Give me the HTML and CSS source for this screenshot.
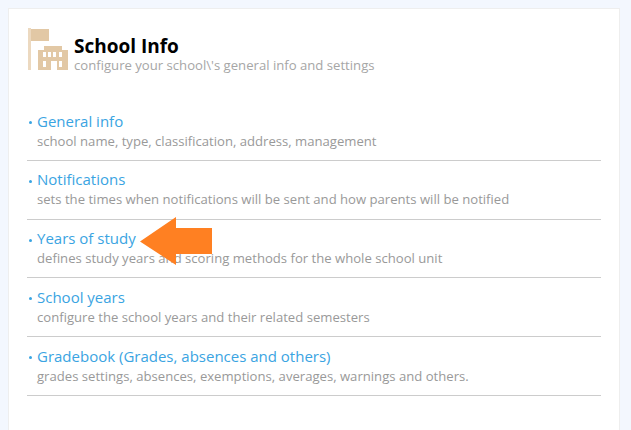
FILE: index.html
```html
<!DOCTYPE html>
<html lang="en">
<head>
<meta charset="utf-8">
<title>School Info</title>
<link rel="stylesheet" href="styles.css">
</head>
<body>
<main class="card">
  <header class="head">
    <svg class="logo" width="41" height="43" viewBox="0 0 41 43" aria-hidden="true">
      <path class="logo-pole" d="M0 0h3v42H0z"/>
      <path class="logo-fill" d="M3 1h18v12H3z"/>
      <path class="logo-fill" fill-rule="evenodd" d="M10 42V22h6v-4h18v4h6v20H29v-9h-6v9zM15 24v5h3v-5zM20 24v5h3v-5zM25 24v5h3v-5zM31 24v5h3v-5zM15 33v6h3v-6zM31 33v6h3v-6z"/>
    </svg>
    <div class="head-text">
      <h1 class="title">School Info</h1>
      <p class="subtitle">configure your school\'s general info and settings</p>
    </div>
  </header>
  <ul class="list">
    <li class="item">
      <a class="link">General info</a>
      <p class="desc">school name, type, classification, address, management</p>
    </li>
    <li class="item">
      <a class="link">Notifications</a>
      <p class="desc">sets the times when notifications will be sent and how parents will be notified</p>
    </li>
    <li class="item">
      <a class="link">Years of study</a>
      <p class="desc">defines study years and scoring methods for the whole school unit</p>
    </li>
    <li class="item">
      <a class="link">School years</a>
      <p class="desc">configure the school years and their related semesters</p>
    </li>
    <li class="item">
      <a class="link">Gradebook (Grades, absences and others)</a>
      <p class="desc">grades settings, absences, exemptions, averages, warnings and others.</p>
    </li>
  </ul>
</main>
<svg class="arrow" width="72" height="48" viewBox="0 0 72 48" aria-hidden="true">
  <path d="M0 24.500L36 0V11H72V37H36V48z"/>
</svg>
</body>
</html>
```
FILE: styles.css
```css
html, body {
  margin: 0;
  padding: 0;
  height: 100%;
  overflow: hidden;
}
body {
  background: #f3f7fe;
  padding: 8px 0 0 8px;
  box-sizing: border-box;
  font-family: "Open Sans", sans-serif;
}
.card {
  width: 612px;
  height: 440px;
  box-sizing: border-box;
  background: #fff;
  border: 1px solid #eeeeee;
  padding: 19px 18px 0 18px;
}
.head {
  display: flex;
  align-items: flex-start;
}
.logo {
  flex: none;
  display: block;
  margin-left: 1px;
  margin-right: 5px;
}
.logo-fill {
  fill: #e2c8a5;
}
.logo-pole {
  fill: #ecd9c0;
}
.head-text {
  padding-top: 7px;
}
.title {
  margin: 0;
  font-size: 19px;
  line-height: 22px;
  font-weight: 700;
  color: #000;
}
.subtitle {
  margin: 0;
  font-size: 13.13px;
  line-height: 17px;
  color: #a6a6a6;
}
.list {
  list-style: none;
  margin: 28px 0 0;
  padding: 0;
}
.item {
  box-sizing: border-box;
  height: 58.75px;
  padding: 8.5px 0 0 10px;
  border-bottom: 1px solid #cccccc;
  position: relative;
}
.item::before {
  content: "";
  position: absolute;
  left: 2px;
  top: 19px;
  width: 3px;
  height: 3px;
  border-radius: 50%;
  background: #3aa4e2;
}
.link {
  display: block;
  font-size: 15px;
  line-height: 21px;
  color: #3aa4e2;
}
.desc {
  margin: 0;
  font-size: 13.11px;
  line-height: 19px;
  color: #999999;
}
.arrow {
  position: absolute;
  left: 140px;
  top: 217px;
}
.arrow path {
  fill: #ff8022;
}
```
